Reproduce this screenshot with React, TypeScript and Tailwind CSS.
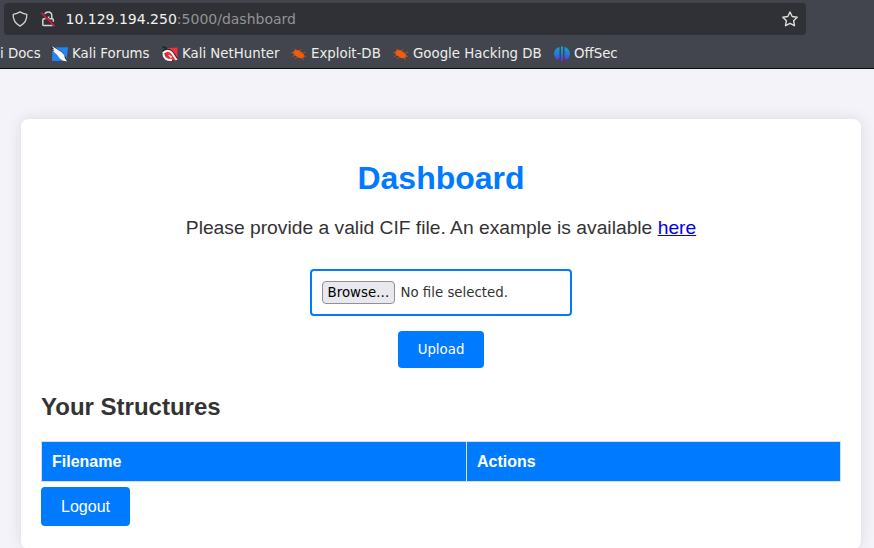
import React from 'react';

const uiFont = "font-['DejaVu_Sans',sans-serif]";

function Shield() {
  return (
    <svg className="h-4 w-4 shrink-0" viewBox="0 0 16 16" fill="none" stroke="#d4d4d0" strokeWidth="1.3" strokeLinejoin="round">
      <path d="M8 .9C6.3 2.1 3.6 3 1.2 3.3c-.2 4.5 1.3 9 6.8 11.8 5.500-2.800 7-7.300 6.800-11.800C12.400 3 9.700 2.100 8 .9Z" />
    </svg>
  );
}

function InsecureLock() {
  return (
    <svg className="h-4 w-4 shrink-0" viewBox="0 0 16 16" fill="none" stroke="#d4d4d0" strokeWidth="1.5" strokeLinejoin="round">
      <path d="M4.800 3C5.400 1.600 6.600 1 8.200 1c2.300 0 3.600 1.600 3.600 3.800v2.800M9.500 7.700h2.700q1.100 0 1.100 1.100v2M5.500 7.700H4q-1.200 0-1.200 1.200v4.500q0 1.100 1.200 1.100h8.500M8.600 7.200V5.500" />
      <path d="M1.300 1.800 14.800 15.300" stroke="#ef1442" strokeWidth="1.3" />
    </svg>
  );
}

function Star() {
  return (
    <svg className="h-4 w-4 shrink-0" viewBox="0 0 16 16" fill="none" stroke="#dededa" strokeWidth="1.4" strokeLinejoin="round">
      <path d="m8 1 2.200 4.500 5 .7-3.600 3.500.9 5L8 12.400l-4.500 2.300.9-5L.8 6.200l5-.7Z" />
    </svg>
  );
}

function ForumIcon() {
  return (
    <svg className="h-4 w-4 shrink-0 overflow-visible" viewBox="0 0 16 16">
      <path d="M.5 1.500 16 1.300 14.500 14.700 0 15Z" fill="#2385f5" />
      <path d="m-1.300-.3 5 2 5 3.200 3 3 2 3 2 4.600-4-.2-4-3-4-5-4-3Z" fill="#252a33" />
      <path d="m-.6 0 4.100 2.300 2 1.200L9 5.700l3.300 3.200.5 3 2.400 3.600-4.200-.7-3.300-2.300-3-4-4-3.600 2 .3-2.800-2 2.500.2Z" fill="#f6f7f5" />
    </svg>
  );
}

function HunterIcon() {
  return (
    <svg className="h-4 w-4 shrink-0" viewBox="0 0 16 16">
      <path d="M4 2.200 15.500 1.500v12.500L3 14Z" fill="#f3303d" />
      <path d="M.5.800 5 2.500M.5 5.500C3 2.500 7 2.500 10.500 6l4.500 6.500" fill="none" stroke="#20222a" strokeWidth="1.500" />
      <path d="M.8 7.500C4 3.700 7.500 4 10 7l4.500 7M1.500 8c0 4 3 6.300 8.500 6M5.500 8.500l4 3" fill="none" stroke="#f8f8f5" strokeWidth="2" />
      <path d="m3 7.500 3-.5 2.500 2.500-1-.3-2-.7 3 3.500-2 .3Z" fill="#ec2440" />
    </svg>
  );
}

function BugIcon() {
  return (
    <svg className="h-4 w-4 shrink-0" viewBox="0 0 16 16" fill="#ef5d0d">
      <path d="M1.500 6.500 4 4c2-.7 4.300.3 5.700 1.700 1.700.8 3.300 2.300 3.800 4l-1.300 2.300c-2.500.7-5.300.1-6.700-1.700C3.800 10 2.300 8 1.500 6.500Z" />
      <path d="M0 6.500 4 7M6 5 3.500 2.700M8.500 5.500 10 3M10.500 7.500l4.500-1.500M12 10l3 .5M5 9l-4 1.500M7 10.500 4 13M11 11l1.500 3" stroke="#c65321" strokeWidth=".8" />
    </svg>
  );
}

function OffSecIcon() {
  return (
    <svg className="h-4 w-4 shrink-0" viewBox="0 0 16 16">
      <defs>
        <linearGradient id="offsec" x2="0" y2="1">
          <stop stopColor="#12a9bc" />
          <stop offset=".5" stopColor="#2878d6" />
          <stop offset="1" stopColor="#6f20df" />
        </linearGradient>
      </defs>
      <path d="M5.500 1C-1.500 3-1.500 11.500 3.700 14l1.800-2ZM10.500 1c7 2 7 10.500 1.800 13l-1.800-2ZM7 .5h2V15l-1 1-1-1Z" fill="url(#offsec)" />
    </svg>
  );
}

const bookmarks = [
  { name: 'Kali Forums', icon: <ForumIcon />, width: 'w-[110px]' },
  { name: 'Kali NetHunter', icon: <HunterIcon />, width: 'w-[129px]' },
  { name: 'Exploit-DB', icon: <BugIcon />, width: 'w-[102px]' },
  { name: 'Google Hacking DB', icon: <BugIcon />, width: 'w-[161px]' },
  { name: 'OffSec', icon: <OffSecIcon />, width: 'w-[80px]' },
];

export default function App() {
  return (
    <div className="h-[548px] w-[874px] overflow-hidden bg-[#f4f3f9] font-['Liberation_Sans',Arial,sans-serif] text-[#333]">
      <header className="h-[69px] border-b border-[#0c0c0d] bg-[#42454d] pt-[3px]">
        <div className="ml-1 flex h-8 w-[802px] items-center rounded bg-[#303136] px-2">
          <Shield />
          <div className="ml-3"><InsecureLock /></div>
          <div className="ml-[9.5px] whitespace-nowrap font-['DejaVu_Sans',sans-serif] text-[14px] leading-5 text-[#929397]">
            <span className="text-[#f3f3f0]">10.129.194.250</span>:5000/dashboard
          </div>
          <div className="ml-auto"><Star /></div>
        </div>
        <nav className={`${uiFont} flex h-[33px] items-center pt-[4px] text-[13.33px] leading-5 whitespace-nowrap text-[#eeeeec]`}>
          <span className="w-[52px]">i Docs</span>
          {bookmarks.map((item) => (
            <a key={item.name} className={`flex shrink-0 items-center gap-1 ${item.width}`}>{item.icon}{item.name}</a>
          ))}
        </nav>
      </header>
      <main className="mt-[50px] ml-[21px] h-[430px] w-[840px] rounded-lg bg-white px-5 pt-[37px] shadow-[0_0_15px_rgba(0,0,0,0.1)]">
        <h1 className="text-center text-[32px] leading-[44px] font-bold text-[#007bff]">Dashboard</h1>
        <p className="mt-[14px] text-center text-[19.25px] leading-7">
          Please provide a valid CIF file. An example is available <a className="text-[#0000ee] underline">here</a>
        </p>
        <form className={`${uiFont} mt-[27px] flex flex-col items-center text-[13.33px]`}>
          <div className="flex h-[47px] w-[262px] items-center rounded border-2 border-[#007bff] px-[10px]">
            <button type="button" className="h-[23px] w-[73px] rounded border border-[#8f8f9d] bg-[#e9e9ed] text-black">Browse…</button>
            <span className="ml-[5.5px]">No file selected.</span>
          </div>
          <button type="button" className="mt-[15px] h-[37px] w-[86px] rounded bg-[#007bff] text-white">Upload</button>
        </form>
        <h2 className="mt-[23px] text-2xl leading-8 font-bold">Your Structures</h2>
        <table className="mt-[18px] h-[41px] w-[800px] table-fixed border-collapse bg-[#007bff] text-left text-base text-white">
          <thead>
            <tr>
              <th className="w-[425px] border border-[#ddd] px-[10px] pt-px">Filename</th>
              <th className="border border-[#ddd] px-[10px] pt-px">Actions</th>
            </tr>
          </thead>
        </table>
        <button className="mt-[5px] h-[39px] w-[89px] rounded bg-[#007bff] text-base text-white">Logout</button>
      </main>
    </div>
  );
}
